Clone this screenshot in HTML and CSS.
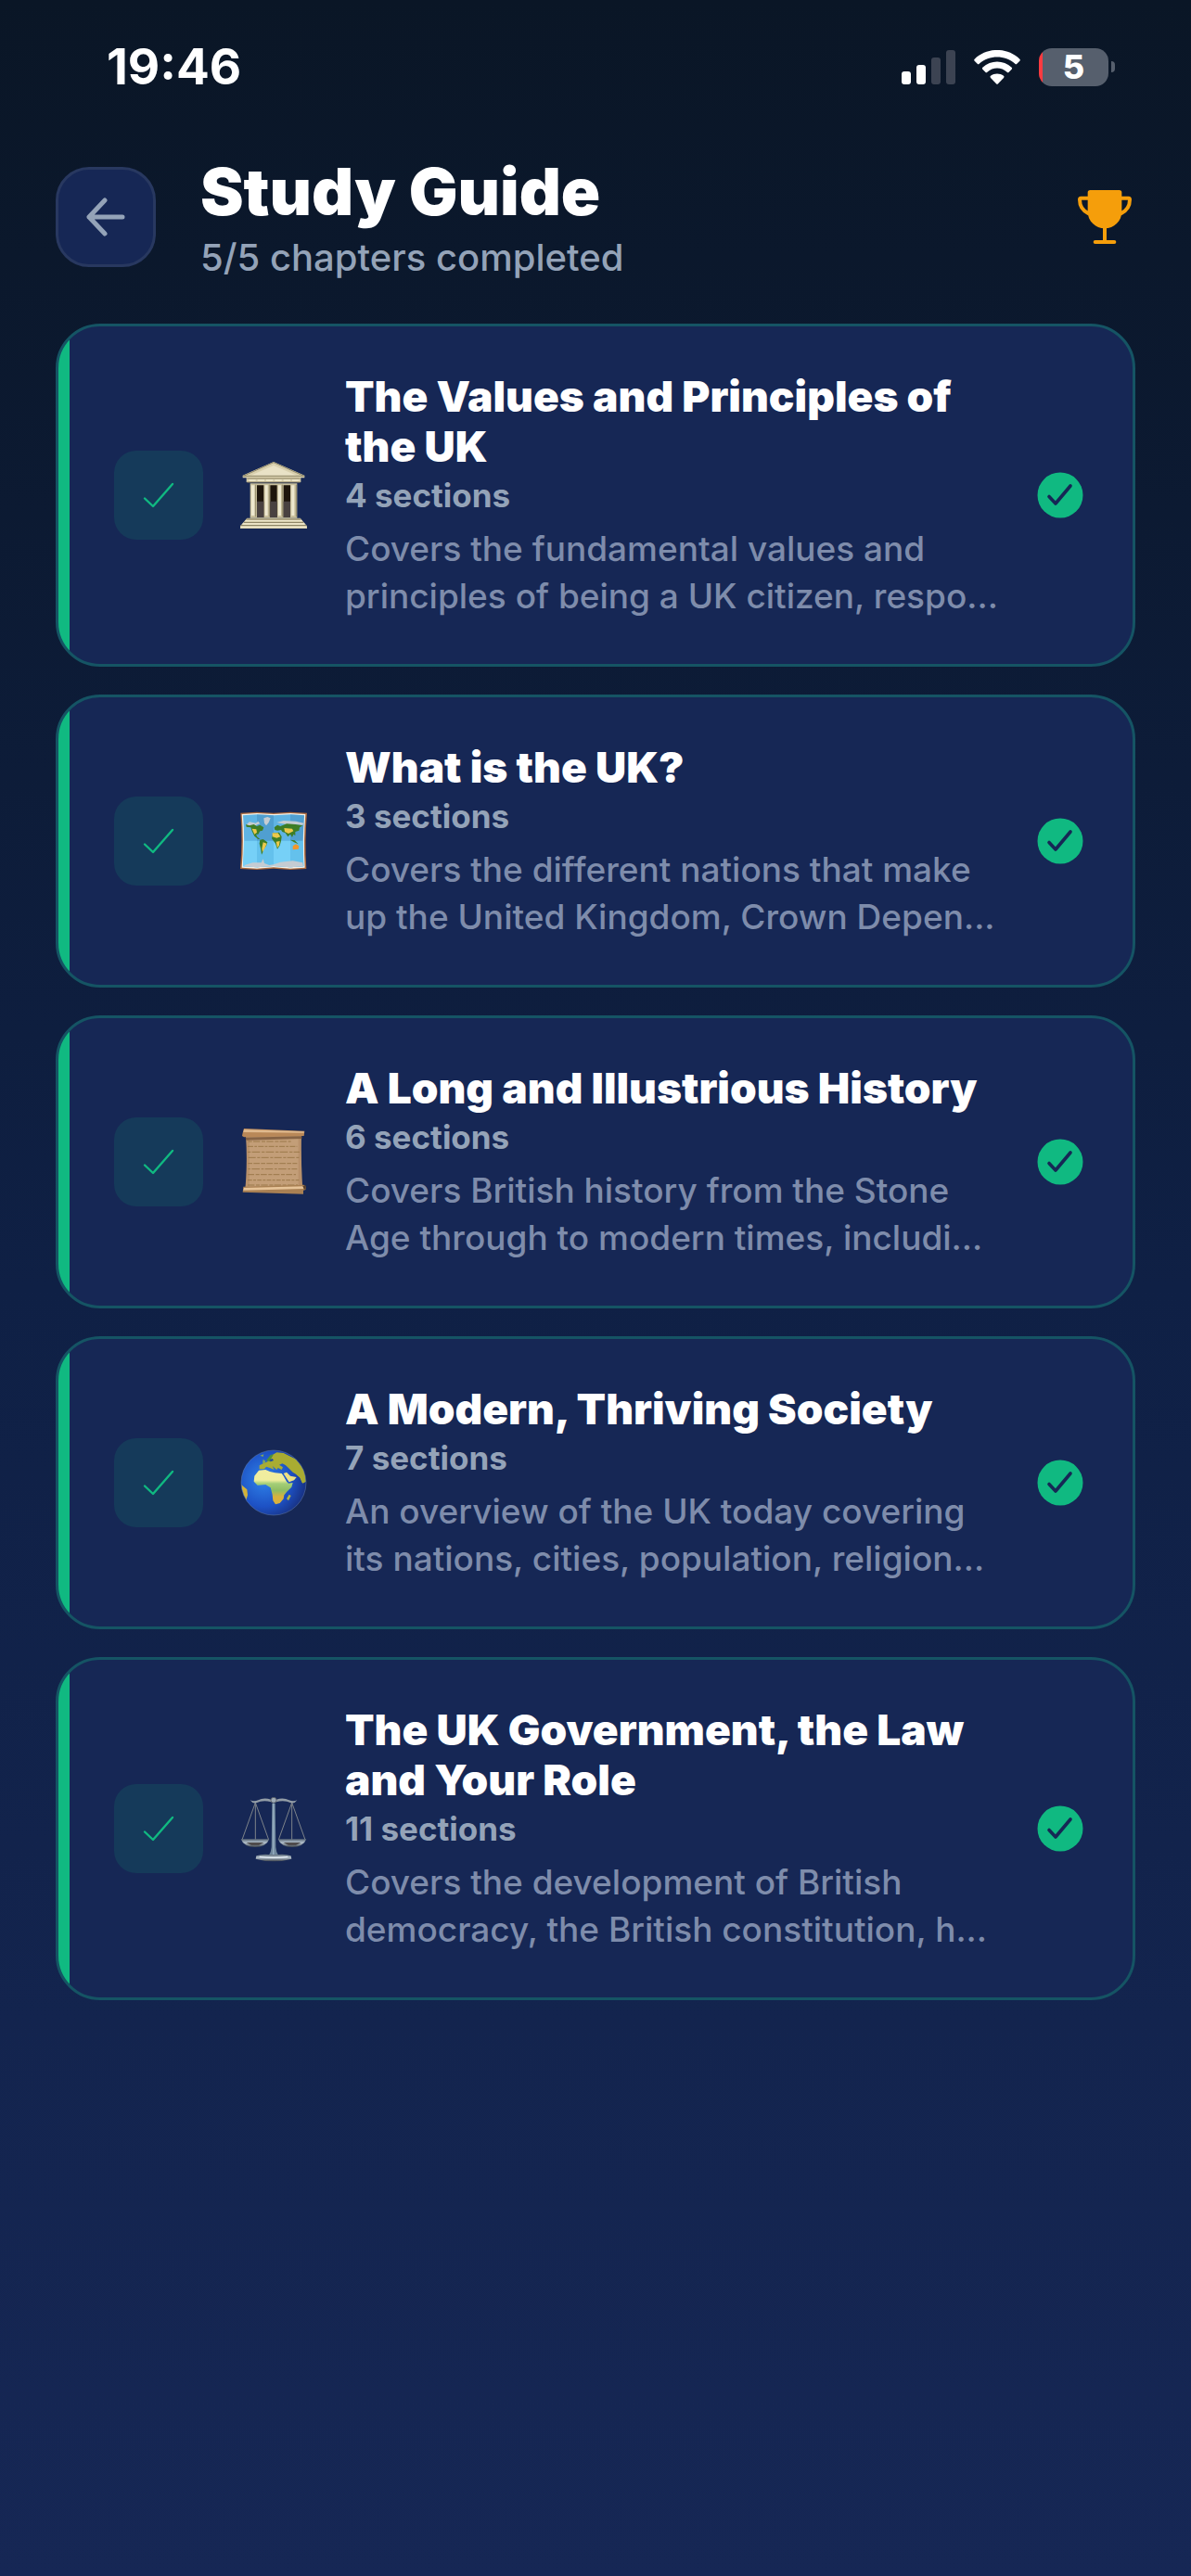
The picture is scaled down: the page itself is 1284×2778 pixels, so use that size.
FILE: index.html
```html
<!DOCTYPE html>
<html lang="en">
<head>
<meta charset="utf-8">
<meta name="viewport" content="width=device-width, initial-scale=1">
<title>Study Guide</title>
<link rel="stylesheet" href="styles.css">
</head>
<body>
<svg class="defs" width="0" height="0" aria-hidden="true">
  <symbol id="tick" viewBox="0 0 34 28"><path d="M2 17.500 11 26 32 2" fill="none" stroke="currentColor" stroke-width="2.400" stroke-linecap="round" stroke-linejoin="round"/></symbol>
  <symbol id="done" viewBox="0 0 50 50"><circle cx="25" cy="25" r="24.500" fill="#10b981"/><path d="M13 26.500 20 34 36 15" fill="none" stroke="#162755" stroke-width="3.600" stroke-linecap="round" stroke-linejoin="round"/></symbol>
</svg>

<div class="statusbar">
  <time class="clock">19:46</time>
  <div class="indicators">
    <svg class="signal" viewBox="0 0 58 37" aria-label="Signal"><g fill="#fff"><rect y="23" width="10" height="14" rx="3"/><rect x="16" y="16" width="10" height="21" rx="3"/></g><g fill="#3c4352"><rect x="32" y="8" width="10" height="29" rx="3"/><rect x="48" width="10" height="37" rx="3"/></g></svg>
    <svg class="wifi" viewBox="0 0 150 111" aria-label="Wi-Fi"><g fill="#fff"><path d="M2 29C42-10 108-10 148 29Q151 32 148 35L139 44Q136 47 133 44C100 15 50 15 17 44Q14 47 11 44L2 35Q-1 32 2 29Z"/><path d="M28 56C55 31 95 31 122 56Q125 59 122 62L113 71Q110 74 107 71C89 54 61 54 43 71Q40 74 37 71L28 62Q25 59 28 56Z"/><path d="M54 83C66 74 84 74 96 83Q99 86 96 90L78 109Q75 112 72 109L54 90Q51 86 54 83Z"/></g></svg>
    <div class="battery"><span class="battery-body">5</span><span class="battery-cap"></span></div>
  </div>
</div>

<header class="header">
  <button class="back" type="button" aria-label="Back">
    <svg viewBox="0 0 42 42"><path d="M20 3 3 21 20 39M3 21H39" fill="none" stroke="#94a3b8" stroke-width="5" stroke-linecap="round" stroke-linejoin="round"/></svg>
  </button>
  <div class="heading">
    <h1>Study Guide</h1>
    <p>5/5 chapters completed</p>
  </div>
  <svg class="trophy" viewBox="0 0 174 174" aria-label="Trophy"><g fill="#f59e0b"><path d="M40 0H134Q142 0 142 8V70C142 101 117 124 87 124S32 101 32 70V8Q32 0 40 0Z"/><rect x="81" y="118" width="12" height="50"/><rect x="50" y="162" width="74" height="12" rx="6"/></g><path d="M34 26H10Q6 26 6 31C6 54 17 68 35 76M140 26H164Q168 26 168 31C168 54 157 68 139 76" fill="none" stroke="#f59e0b" stroke-width="12"/></svg>
</header>

<main class="chapters">
  <a class="card" href="#values">
    <span class="check"><svg><use href="#tick"/></svg></span>
    <svg class="emoji" viewBox="0 0 216 216" aria-hidden="true">
      <path d="M108 0 208 44V52H196V66H20V52H8V44Z" fill="#d9d0ae"/><path d="M108 12 182 44H34Z" fill="#e9e2c6"/><path d="M108 2 206 46H10Z" fill="none" stroke="#8f8768" stroke-width="3"/>
      <path d="M22 54H194M22 66H194" stroke="#8c8263" stroke-width="3"/><path d="M28 60H190" stroke="#f2ebd0" stroke-width="5" stroke-dasharray="22 6"/>
      <path d="M32 70H184V182H32Z" fill="#c9c09c"/><path d="M54 76H76V180H54ZM97 76H119V180H97ZM140 76H162V180H140Z" fill="#1e150c"/><path d="M54 128H76V180H54ZM97 128H119V180H97ZM140 128H162V180H140Z" fill="#494140"/>
      <path d="M36 76H46V174H36ZM80 76H89V174H80ZM123 76H132V174H123ZM166 76H175V174H166Z" fill="#eee8cf"/><path d="M50 74V178M94 74V178M136 74V178M181 74V178" stroke="#938a6b" stroke-width="3"/>
      <path d="M22 182H194L216 208V216H0V208Z" fill="#d8cfab"/><path d="M20 186H196M12 196H204M3 206H213" stroke="#81785a" stroke-width="3"/><path d="M16 191H200M8 201H208M2 211H214" stroke="#f1ead0" stroke-width="4"/>
    </svg>
    <span class="info">
      <strong class="title">The Values and Principles of<br>the UK</strong>
      <span class="count">4 sections</span>
      <span class="summary">Covers the fundamental values and<br>principles of being a UK citizen, respo...</span>
    </span>
    <svg class="done"><use href="#done"/></svg>
  </a>

  <a class="card" href="#what-is-the-uk">
    <span class="check"><svg><use href="#tick"/></svg></span>
    <svg class="emoji" viewBox="0 0 216 216" aria-hidden="true">
      <path d="M1 17 54 14 108 17 162 14 216 17Q208 108 214 198L162 201 108 197 54 201 0 198Q8 108 1 17Z" fill="#a9683c"/>
      <path d="M5 21 54 18 108 21 162 18 211 21Q204 108 209 194L162 197 108 193 54 197 5 194Q12 108 5 21Z" fill="#f3f1ea"/>
      <path d="M9 25 54 22 108 25 162 22 207 25Q200 108 205 190L162 193 108 189 54 193 9 190Q16 108 9 25Z" fill="#5fb4e4"/>
      <path d="M12 107H203L205 190 162 193 108 189 54 193 9 190Z" fill="#76d0f7"/>
      <path d="M54 22 108 25V107H54ZM162 22 207 25 203 107H162Z" fill="#3f86b8" opacity=".45"/><path d="M54 107H108V189L54 193ZM162 107H203L205 190 162 193Z" fill="#4aa9dd" opacity=".4"/>
      <path d="M18 56 30 46 50 50 58 44 64 52 48 58 24 58ZM76 34 88 30 98 34 92 48 84 58 78 50ZM118 48 140 42 180 44 206 50 202 56 150 54ZM14 186 40 178 68 178 74 166 78 180 94 186 108 184 130 176 170 172 202 178 204 190 162 193 108 189 54 193 14 190Z" fill="#c5ccd2"/>
      <path d="M18 54 30 58 44 54 54 60 64 56 76 64 72 74 64 76 58 86 52 86 54 94 64 102 58 102 46 92 38 76 34 64 20 62ZM64 104 74 102 88 112 84 124 76 134 72 146 69 152 66 132 62 116ZM110 64 120 56 130 60 150 52 178 54 202 58 192 64 190 74 178 78 178 90 172 86 168 96 162 86 154 94 146 82 136 78 132 72 120 74 112 72ZM106 82 126 80 134 94 132 108 128 122 120 134 114 116 102 100ZM162 104 176 106 188 118 174 112Z" fill="#3d7d26"/>
      <path d="M38 68 52 70 54 80 46 86ZM104 82 122 82 130 94 118 98 104 94ZM116 110 128 108 126 122 120 130ZM142 66 168 68 172 76 156 84 144 78ZM74 112 86 116 80 130 72 144 70 132Z" fill="#ecc84b"/><path d="M170 124 180 118 190 124 188 134 170 136Z" fill="#f2962c"/>
    </svg>
    <span class="info">
      <strong class="title">What is the UK?</strong>
      <span class="count">3 sections</span>
      <span class="summary">Covers the different nations that make<br>up the United Kingdom, Crown Depen...</span>
    </span>
    <svg class="done"><use href="#done"/></svg>
  </a>

  <a class="card" href="#history">
    <span class="check"><svg><use href="#tick"/></svg></span>
    <svg class="emoji" viewBox="0 0 216 216" aria-hidden="true">
      <path d="M18 24H198Q196 110 202 196H16Q24 110 18 24Z" fill="#b8916b"/><path d="M30 32H188V188H30Z" fill="#c39e78"/>
      <g stroke="#92703f" stroke-width="3" fill="none" opacity=".8"><path d="M26 42H164" stroke-dasharray="12 4 22 5"/><path d="M24 58H184" stroke-dasharray="18 4 8 4"/><path d="M24 76H192" stroke-dasharray="10 4 26 5"/><path d="M26 94H190" stroke-dasharray="24 5 9 4"/><path d="M25 113H184" stroke-dasharray="14 4 20 4"/><path d="M25 131H184" stroke-dasharray="8 4 26 5"/><path d="M25 149H180" stroke-dasharray="20 5 12 4"/><path d="M24 167H190" stroke-dasharray="14 4 9 4"/><path d="M24 183H186" stroke-dasharray="22 5 12 4"/></g>
      <path d="M12 0 208 8 206 24 12 28 6 24 8 14Z" fill="#b98858"/><path d="M12 3 206 10V14L10 12Z" fill="#dfb98e"/><path d="M16 29 200 25V33L20 38Z" fill="#6f4f33" opacity=".7"/>
      <path d="M10 188 206 182 212 188V198L204 200V212L8 206Z" fill="#a98053"/><path d="M12 192 206 187V195L10 200Z" fill="#e6c398"/><path d="M202 186 212 184V198L206 196Z" fill="#59412c"/>
    </svg>
    <span class="info">
      <strong class="title">A Long and Illustrious History</strong>
      <span class="count">6 sections</span>
      <span class="summary">Covers British history from the Stone<br>Age through to modern times, includi...</span>
    </span>
    <svg class="done"><use href="#done"/></svg>
  </a>

  <a class="card" href="#society">
    <span class="check"><svg><use href="#tick"/></svg></span>
    <svg class="emoji" viewBox="0 0 216 216" aria-hidden="true">
      <defs><radialGradient id="sea" cx=".35" cy=".45" r=".7"><stop offset="0" stop-color="#2f83ea"/><stop offset=".6" stop-color="#1d51c4"/><stop offset="1" stop-color="#172c78"/></radialGradient><linearGradient id="land" x1="0" y1="0" x2="0" y2="1"><stop offset="0" stop-color="#f1eda0"/><stop offset=".3" stop-color="#f0ee9e"/><stop offset=".4" stop-color="#a4ce78"/><stop offset=".6" stop-color="#8fbd62"/><stop offset=".78" stop-color="#d9b13e"/></linearGradient><clipPath id="globe"><circle cx="108" cy="108" r="104"/></clipPath></defs>
      <circle cx="108" cy="108" r="105" fill="url(#sea)"/>
      <g clip-path="url(#globe)"><path d="M60 68 82 66 96 72 112 76 134 78 140 86 150 104 156 110 170 108 166 122 150 138 142 148 140 160 128 174 114 178 106 166 104 146 98 124 82 114 56 116 44 104 46 86Z" fill="url(#land)"/>
      <path d="M62 52 74 46 88 40 98 22 118 10 140 12 180 32 208 68 214 104 202 110 192 90 182 82 170 74 158 62 148 52 136 46 126 50 138 58 134 66 122 60 118 66 104 54 110 66 96 60 84 56 78 64 62 64Z" fill="#a9ac32"/><path d="M140 78 150 74 162 86 182 90 174 100 158 106 150 94Z" fill="#ede184"/><path d="M84 36 98 18 108 16 100 30 98 40Z" fill="#4c8f3c"/><path d="M96 34 104 30 108 36 98 40Z" fill="#1e4a9f"/>
      <path d="M150 54 166 66 178 76 184 84 194 92 200 108 212 104 206 66 180 32 140 14 132 36Z" fill="#a9ac32"/>
      <path d="M0 110 10 120 22 130 24 148 18 168 0 150Z" fill="#d3b33a"/><path d="M150 160 158 146 164 150 156 166Z" fill="#b3b542"/><path d="M74 32 82 38 80 46 72 44ZM64 20 76 16 74 24Z" fill="#7fa55b"/></g>
      <circle cx="108" cy="108" r="105" fill="none" stroke="#7591b8" stroke-width="2" opacity=".6"/>
    </svg>
    <span class="info">
      <strong class="title">A Modern, Thriving Society</strong>
      <span class="count">7 sections</span>
      <span class="summary">An overview of the UK today covering<br>its nations, cities, population, religion...</span>
    </span>
    <svg class="done"><use href="#done"/></svg>
  </a>

  <a class="card" href="#government">
    <span class="check"><svg><use href="#tick"/></svg></span>
    <svg class="emoji" viewBox="0 -8 216 216" aria-hidden="true">
      <defs><linearGradient id="steel" x1="0" y1="0" x2="0" y2="1"><stop offset="0" stop-color="#5c6a78"/><stop offset=".45" stop-color="#b4c2ce"/><stop offset="1" stop-color="#3c424a"/></linearGradient></defs>
      <g fill="none" stroke="#7d838a" stroke-width="3"><path d="M49 16 6 136M49 16 92 136M49 16V136M167 16 124 136M167 16 210 136M167 16V136"/></g>
      <path d="M32 8Q44 14 58 8 76-2 100 6H116Q140-2 158 8 172 14 184 8 176 20 164 17 142 6 116 14H100Q74 6 52 17 40 20 32 8Z" fill="#929ca6"/>
      <circle cx="108" cy="8" r="9" fill="#9eabb6" stroke="#4b4f55" stroke-width="2"/>
      <path d="M103 18H113L115 160Q116 176 124 188H92Q100 176 101 160Z" fill="#6f879c"/><path d="M106 18H109V184H106Z" fill="#a9bfd2"/>
      <path d="M2 134H94Q84 160 48 160T2 134ZM122 134H214Q204 160 168 160T122 134Z" fill="url(#steel)"/><path d="M20 145H76L60 154H36ZM140 145H196L180 154H156Z" fill="#4e4b4c"/>
      <path d="M52 188Q70 182 92 184H124Q146 182 164 188L166 198Q140 206 108 206T50 198Z" fill="url(#steel)"/><path d="M62 191Q108 197 154 191" stroke="#e8f0f6" stroke-width="4" fill="none"/>
    </svg>
    <span class="info">
      <strong class="title">The UK Government, the Law<br>and Your Role</strong>
      <span class="count">11 sections</span>
      <span class="summary">Covers the development of British<br>democracy, the British constitution, h...</span>
    </span>
    <svg class="done"><use href="#done"/></svg>
  </a>
</main>
</body>
</html>
```
FILE: styles.css
```css
* { box-sizing: border-box; }

body {
  margin: 0;
  min-height: 100vh;
  background: linear-gradient(#0a1626, #0f2045 50%, #162755);
  color: #fff;
  font-family: Inter, "Liberation Sans", sans-serif;
}

.defs { position: absolute; }

.statusbar {
  display: flex;
  align-items: center;
  justify-content: space-between;
  height: 144px;
  padding: 0 82px 0 115px;
}

.clock { font-size: 53px; font-weight: 700; line-height: 60px; }

.indicators { display: flex; align-items: center; gap: 20px; }
.signal { width: 58px; height: 37px; }
.wifi { width: 50px; height: 37px; }
.battery { display: flex; align-items: center; gap: 3px; }
.battery-body {
  width: 75px;
  height: 41px;
  border-radius: 14px;
  background: linear-gradient(90deg, #ff3b40 4px, #565f6d 4px);
  font-size: 36px;
  font-weight: 800;
  line-height: 41px;
  text-align: center;
}
.battery-cap { width: 4px; height: 12px; border-radius: 0 4px 4px 0; background: #565f6d; }

.header {
  display: flex;
  align-items: center;
  gap: 48px;
  padding: 21px 64px 47px 60px;
}

.back {
  display: grid;
  place-items: center;
  width: 108px;
  height: 108px;
  padding: 0;
  border: 3px solid #283860;
  border-radius: 36px;
  background: #162755;
}
.back svg { width: 42px; height: 42px; }

.heading { flex: 1; }
.heading h1 { margin: 0 0 4px; font-size: 70px; font-weight: 900; line-height: 84px; }
.heading p { margin: 0; color: #94a3b8; font-size: 40px; font-weight: 500; line-height: 49px; }

.trophy { width: 58px; height: 58px; }

.chapters { display: flex; flex-direction: column; gap: 30px; padding: 0 60px; }

.card {
  display: flex;
  align-items: center;
  padding: 48px 48px 48px 60px;
  border: 3px solid #155464;
  border-radius: 48px;
  background: linear-gradient(90deg, #10b981 12px, #162755 12px);
  color: inherit;
  text-decoration: none;
}

.check {
  display: grid;
  place-items: center;
  width: 96px;
  height: 96px;
  border-radius: 24px;
  background: #153a5a;
  color: #10b981;
}
.check svg { width: 34px; height: 28px; }

.emoji { width: 72px; height: 72px; margin: 0 41px 0 40px; }

.info { display: flex; flex: 1; flex-direction: column; white-space: nowrap; }
.title { font-size: 46px; font-weight: 900; line-height: 54px; }
.count { margin: 6px 0 12px; color: #94a3b8; font-size: 35px; font-weight: 700; line-height: 40px; }
.summary { color: #7e8cab; font-size: 37px; font-weight: 500; line-height: 51px; }

.done { width: 50px; height: 50px; margin-right: 5px; }
```
